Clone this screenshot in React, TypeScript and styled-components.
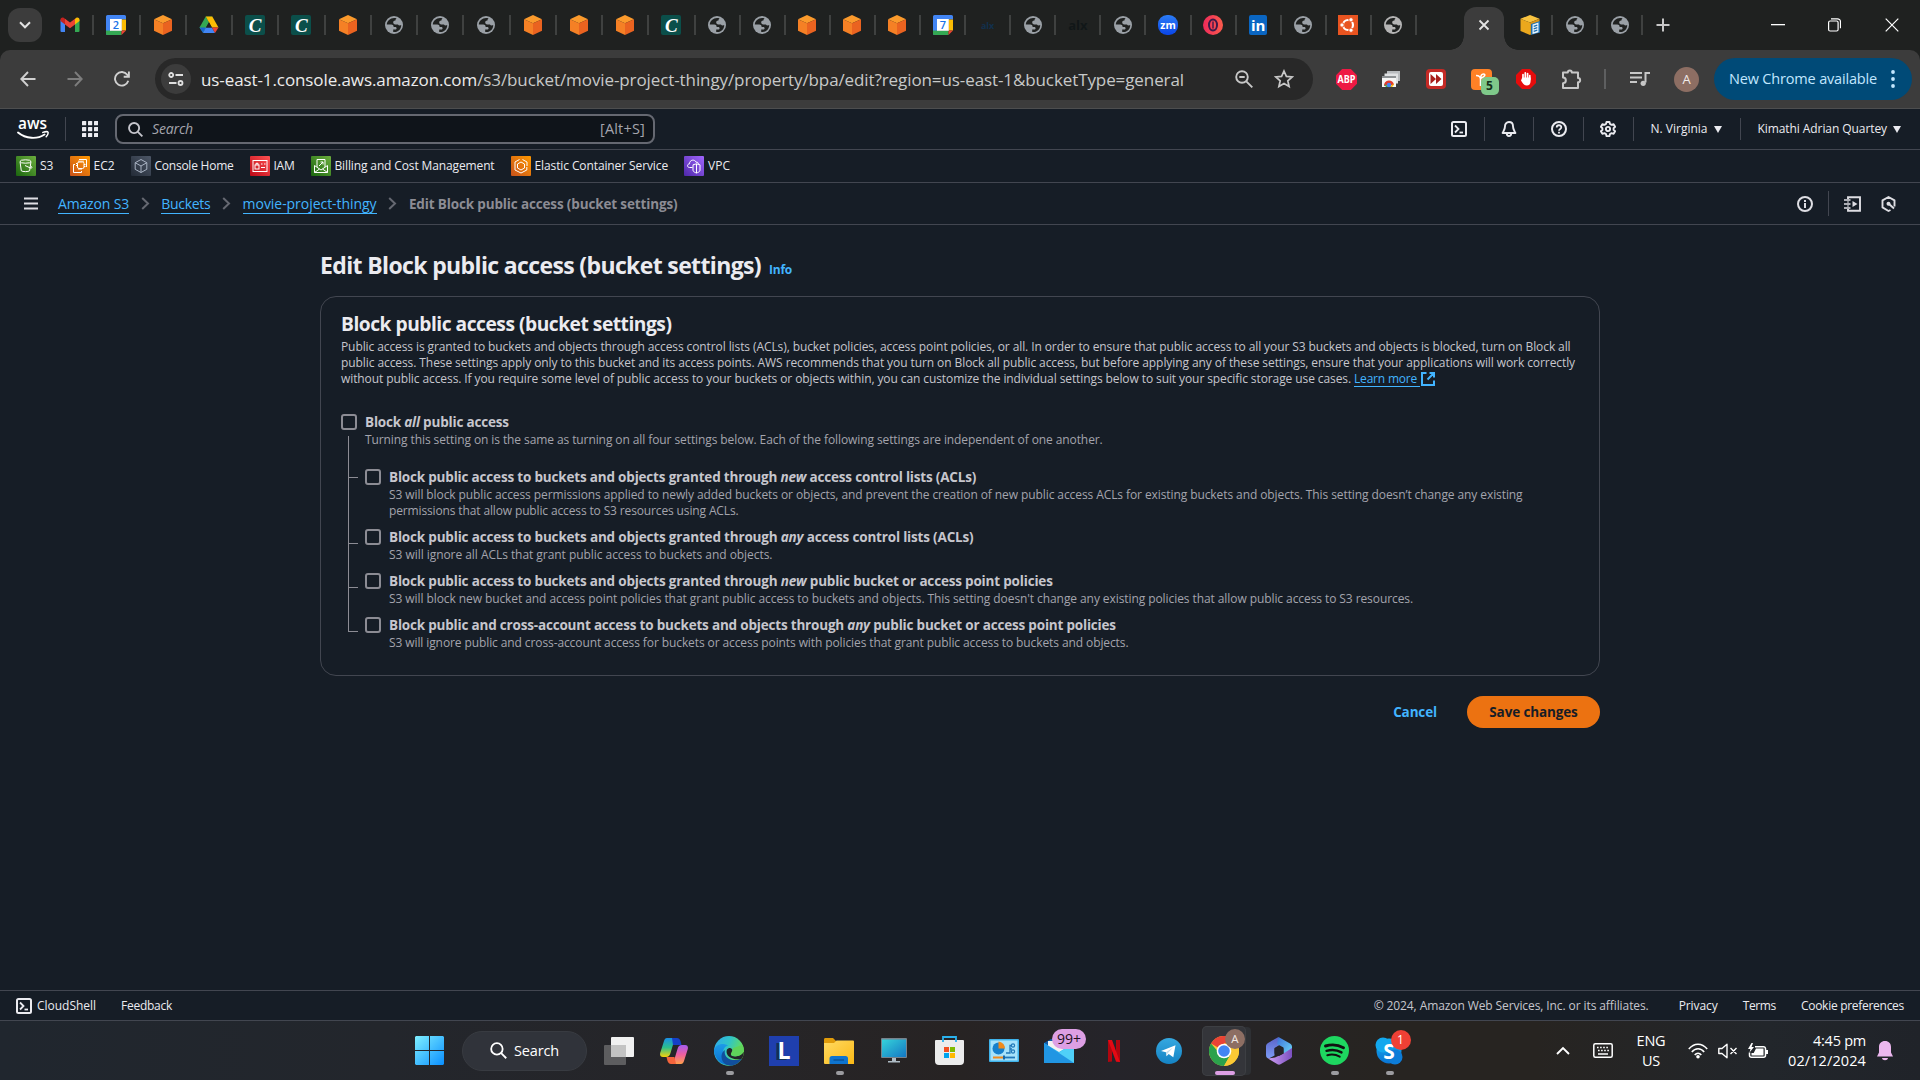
import React from "react";
import styled, { createGlobalStyle, css } from "styled-components";

const sans = `"Open Sans", "Noto Sans", "Liberation Sans", sans-serif`;

const GlobalStyle = createGlobalStyle`
  * { box-sizing: border-box; }
  html, body { margin: 0; padding: 0; }
  body { background: #161d26; font-family: ${sans}; color: #dedee3; overflow: hidden; }
  svg { display: block; flex: none; }
`;

const T = styled.span<{ $ls?: number }>`
  white-space: pre;
  letter-spacing: ${(p) => p.$ls ?? 0}px;
`;

const Screen = styled.div`
  width: 1920px;
  height: 1080px;
  display: flex;
  flex-direction: column;
  overflow: hidden;
`;

/* ---------- browser tab strip ---------- */

const TabStrip = styled.div`
  height: 50px;
  flex: none;
  display: flex;
  align-items: center;
  background: #1f2120;
`;
const TabSearch = styled.div`
  width: 34px;
  height: 34px;
  margin: 0 6px 0 8px;
  border-radius: 12px;
  background: #3c3c3c;
  display: grid;
  place-items: center;
`;
const TabCell = styled.div<{ $w: number }>`
  width: ${(p) => p.$w}px;
  height: 20px;
  flex: none;
  display: flex;
  align-items: center;
  justify-content: center;
  border-right: 2px solid #3f4140;
`;
const ActiveTab = styled.div`
  align-self: flex-end;
  display: flex;
  align-items: flex-end;
  margin: 0 -10px 0 33px;
`;
const ActiveBody = styled.div`
  width: 40px;
  height: 43px;
  border-radius: 12px 12px 0 0;
  background: #3c3c3c;
  display: grid;
  place-items: center;
  padding-bottom: 7px;
`;
const Flare = styled.div<{ $side: "left" | "right" }>`
  width: 14px;
  height: 14px;
  background: radial-gradient(circle at ${(p) => (p.$side === "left" ? "0 0" : "100% 0")}, transparent 13.5px, #3c3c3c 14px);
`;
const NewTab = styled.div`
  width: 40px;
  display: grid;
  place-items: center;
`;
const WindowControls = styled.div`
  margin-left: auto;
  display: flex;
  & > div { width: 57px; display: grid; place-items: center; }
`;
const LetterTile = styled.div<{ $bg: string; $r: number; $size: number; $w?: number }>`
  width: ${(p) => p.$w ?? 20}px;
  height: 20px;
  border-radius: ${(p) => p.$r}px;
  background: ${(p) => p.$bg};
  color: #fff;
  font-size: ${(p) => p.$size}px;
  font-weight: 700;
  line-height: 1;
  display: grid;
  place-items: center;
`;
const ScriptTile = styled(LetterTile)`
  font-family: "Liberation Serif", serif;
  font-style: italic;
`;
const DarkWord = styled.div<{ $c: string; $size: number }>`
  color: ${(p) => p.$c};
  font-size: ${(p) => p.$size}px;
  font-weight: 700;
  line-height: 1;
`;

const Gmail = () => (
  <svg width="20" height="16" viewBox="0 0 20 16">
    <path d="M0.5 2.5V14a1 1 0 0 0 1 1H5V6.5z" fill="#4285f4" />
    <path d="M19.5 2.5V14a1 1 0 0 1-1 1H15V6.5z" fill="#34a853" />
    <path d="M15 1.8V7.5L19.5 4V2.7c0-2-2.2-2.6-3.4-1.7z" fill="#fbbc04" />
    <path d="M5 7.5V1.8L10 5.6l5-3.8v5.7l-5 3.8z" fill="#ea4335" />
    <path d="M.5 2.7V4L5 7.5V1.8L3.9 1C2.7.1.5.7.5 2.7z" fill="#c5221f" />
  </svg>
);
const Calendar = ({ day }: { day: string }) => (
  <svg width="20" height="20" viewBox="0 0 20 20">
    <path d="M0 1.5A1.5 1.5 0 0 1 1.5 0H18.5A1.5 1.5 0 0 1 20 1.5V4.5H0z" fill="#4285f4" />
    <path d="M0 4H4.5V20H1.5A1.5 1.5 0 0 1 0 18.5z" fill="#4285f4" />
    <path d="M15.5 4.5H20V15.5H15.5z" fill="#fbbc04" />
    <path d="M0 15.5H15.5V20H1.5A1.5 1.5 0 0 1 0 18.5z" fill="#34a853" />
    <path d="M15.5 15.5H20L15.5 20z" fill="#ea4335" />
    <rect x="4" y="4" width="11.8" height="11.8" fill="#fff" />
    <text x="9.9" y="13.9" textAnchor="middle" fontSize="11" fontWeight="600" fill="#1a73e8">{day}</text>
  </svg>
);
const Cube = () => (
  <svg width="20" height="20" viewBox="0 0 20 20">
    <path d="M10 0L19 4.3 10 8.2 1 4.3z" fill="#fb9a2c" />
    <path d="M1 4.3L10 8.2V20L1 15.7z" fill="#f58025" />
    <path d="M19 4.3L10 8.2V20l9-4.3z" fill="#ea6320" />
  </svg>
);
const Drive = () => (
  <svg width="20" height="18" viewBox="0 0 20 18">
    <path d="M6.7.5h6.6L10 6.2z" fill="#188038" />
    <path d="M6.7.5L10 6.2 4.3 16.8.5 11.5z" fill="#34a853" />
    <path d="M13.3.5L19.5 11.5h-6.6L6.7.5z" fill="#fbbc04" />
    <path d="M.5 11.5H6.9L4 17z" fill="#1967d2" />
    <path d="M6.9 11.5h6L16 17H4z" fill="#4285f4" />
    <path d="M12.9 11.5h6.6L16 17z" fill="#ea4335" />
    <path d="M10 6.2L6.9 11.5h6z" fill="#1f2120" />
  </svg>
);
const Globe = ({ c = "#9aa0a6" }: { c?: string }) => (
  <svg width="18" height="18" viewBox="0 0 18 18">
    <circle cx="9" cy="9" r="9" fill={c} />
    <path d="M9.500 1.900C5.300 1.700 1.900 4.700 1.800 8.600H6.300c1.300 0 2.300.9 2.300 2.100v.3h1.700c.8 0 1.300.6 1.300 1.300 0 .8-.6 1.300-1.300 1.300H8.200v2.300c4.400.9 8.200-2.600 8-6.900-1 .8-2.700.6-3.300-.6H10.200c-1.200 0-2-.9-2-1.900 0-1.100.8-1.900 1.900-1.900h.4c0-1 .3-1.900 1.300-2C11.800 2.200 10.500 1.900 9.500 1.900z" fill="#1f2120" />
    <path d="M2.200 10.200H5.600v3.200l1.500 1.500" fill="none" stroke="#1f2120" strokeWidth="0" />
  </svg>
);
const OperaLike = () => (
  <svg width="20" height="20" viewBox="0 0 20 20">
    <defs><linearGradient id="op" x1="0" x2="1"><stop offset="0" stopColor="#ee2a5a" /><stop offset="1" stopColor="#fb5b4c" /></linearGradient></defs>
    <circle cx="10" cy="10" r="10" fill="url(#op)" />
    <ellipse cx="10" cy="10" rx="4" ry="5.5" fill="none" stroke="#3b1a4a" strokeWidth="2" />
    <path d="M10 6.5V13.5" stroke="#3b1a4a" strokeWidth="1.4" />
  </svg>
);
const Ubuntu = () => (
  <svg width="20" height="20" viewBox="0 0 20 20">
    <rect width="20" height="20" fill="#e95420" />
    <circle cx="10" cy="10" r="5" fill="none" stroke="#fff" strokeWidth="2.2" />
    {[[4, 10], [13, 4.8], [13, 15.2]].map(([x, y]) => (
      <circle key={y} cx={x} cy={y} r="2.200" fill="#fff" stroke="#e95420" strokeWidth="1" />
    ))}
  </svg>
);
const BoxDoc = () => (
  <svg width="20" height="20" viewBox="0 0 20 20">
    <path d="M10 0l9.5 3.8L10 7.6.5 3.8z" fill="#f9c440" />
    <path d="M.5 3.8L10 7.6V20L.5 16z" fill="#eba81d" />
    <path d="M19.5 3.8L10 7.6V20l9.500-4z" fill="#d9961a" />
    <path d="M11 9l9-3v11.500l-9 2.500z" fill="#1d6fb0" />
    <path d="M12.500 9.500l6-2v9.800l-6 1.700z" fill="#eaf4fb" />
    <path d="M13.700 11.300l3.600-1.100M13.700 13.800l3.600-1.100M13.700 16.300l3.600-1.100" stroke="#1d6fb0" strokeWidth="1.3" />
  </svg>
);

const wideTabs = [
  <Gmail />, <Calendar day="2" />, <Cube />, <Drive />, "C", "C", <Cube />, <Globe />, <Globe />, <Globe />,
  <Cube />, <Cube />, <Cube />, "C",
];
const narrowTabs = [
  <Globe />, <Globe />, <Cube />, <Cube />, <Cube />, <Calendar day="7" />,
  <DarkWord $c="#12304d" $size={9}>alx</DarkWord>, <Globe />,
  <DarkWord $c="#111718" $size={13}>alx</DarkWord>, <Globe />,
  <LetterTile $bg="linear-gradient(#2b7cf5,#0a45e8)" $r={9} $size={10.5}>zm</LetterTile>,
  <OperaLike />,
  <LetterTile $bg="#0a66c2" $r={2} $size={15} $w={18}>in</LetterTile>,
  <Globe />, <Ubuntu />, <Globe c="#b4b4b4" />,
];

/* ---------- browser toolbar ---------- */

const ToolbarBack = styled.div`
  background: #1f2120;
  flex: none;
`;
const Toolbar = styled.div`
  height: 59px;
  display: flex;
  align-items: center;
  background: #3c3c3c;
  border-bottom: 1px solid #4d4e4f;
  border-radius: 10px 10px 0 0;
`;
const NavButtons = styled.div`
  display: flex;
  width: 155px;
  padding-left: 4px;
  & > div { width: 47px; display: grid; place-items: center; }
`;
const UrlBar = styled.div`
  width: 1158px;
  height: 42px;
  border-radius: 21px;
  background: #282828;
  display: flex;
  align-items: center;
  padding: 0 19px 0 6px;
  font-size: 17px;
  color: #c7c9c8;
`;
const SiteInfo = styled.div`
  width: 30px;
  height: 30px;
  border-radius: 15px;
  background: #3c3c3c;
  display: grid;
  place-items: center;
  margin-right: 10px;
`;
const Domain = styled.span` color: #ececec; `;
const UrlActions = styled.div`
  margin-left: auto;
  display: flex;
  gap: 21px;
  align-items: center;
`;
const Extensions = styled.div`
  display: flex;
  margin-left: 10.5px;
  & > div { width: 45px; display: grid; place-items: center; }
`;
const Divider = styled.div<{ $h: number; $ml: number; $mr: number; $c: string; $w?: number }>`
  width: ${(p) => p.$w ?? 1}px;
  height: ${(p) => p.$h}px;
  margin: 0 ${(p) => p.$mr}px 0 ${(p) => p.$ml}px;
  background: ${(p) => p.$c};
  flex: none;
`;
const ExtWithBadge = styled.div` position: relative; `;
const CountBadge = styled.div`
  position: absolute;
  left: 22px;
  top: 8px;
  width: 18px;
  height: 18px;
  border-radius: 5px;
  background: #7fc98a;
  color: #16301b;
  font-size: 12px;
  font-weight: 700;
  line-height: 18px;
  text-align: center;
`;
const Avatar = styled.div`
  width: 25px;
  height: 25px;
  border-radius: 50%;
  background: #8d6e63;
  color: #f2ecea;
  font-size: 13px;
  display: grid;
  place-items: center;
  margin-left: 24px;
`;
const UpdatePill = styled.div`
  height: 42px;
  width: 198px;
  margin-left: 15px;
  border-radius: 21px;
  background: #004a77;
  color: #c2e7ff;
  font-size: 14.5px;
  display: flex;
  align-items: center;
  justify-content: space-between;
  padding: 0 17px 0 15px;
  & > span { padding-bottom: 1px; }
`;

/* ---------- AWS console navigation ---------- */

const TopNav = styled.div`
  height: 41px;
  flex: none;
  display: flex;
  align-items: center;
  border-bottom: 1px solid #424650;
  font-size: 12px;
  font-weight: 500;
  color: #ebebf0;
  padding-left: 17px;
`;
const SearchBox = styled.div`
  width: 540px;
  height: 30px;
  margin-left: 17px;
  border: 2px solid #656871;
  border-radius: 8px;
  background: #0f141a;
  display: flex;
  align-items: center;
  padding: 0 8px 0 11px;
  font-size: 14px;
  font-weight: 400;
  color: #a4a4ad;
`;
const Placeholder = styled.span`
  font-style: italic;
  margin-left: 9px;
  flex: 1;
  padding-bottom: 1px;
`;
const Shortcut = styled.span`
  font-size: 14.5px;
  padding-bottom: 1px;
`;
const NavIcons = styled.div<{ $pr: number }>`
  margin-left: auto;
  display: flex;
  align-items: center;
  padding-right: ${(p) => p.$pr}px;
`;
const NavIcon = styled.div`
  width: 49.6px;
  height: 24px;
  display: grid;
  place-items: center;
  border-right: 1px solid #424650;
`;
const NavMenu = styled.div<{ $last?: boolean }>`
  height: 22px;
  display: flex;
  align-items: center;
  gap: 6px;
  padding: 0 18px 0 17px;
  ${(p) => !p.$last && css`border-right: 1px solid #424650;`}
  & > span:first-child { padding-bottom: 1px; }
`;
const Caret = styled.span`
  width: 0;
  height: 0;
  border: 4px solid transparent;
  border-top: 7px solid #ebebf0;
  border-bottom: 0;
`;
const Favorites = styled.div`
  height: 33px;
  flex: none;
  display: flex;
  align-items: center;
  gap: 16px;
  padding-left: 16px;
  border-bottom: 1px solid #424650;
  font-size: 12px;
  font-weight: 500;
  color: #ebebf0;
`;
const Favorite = styled.div`
  display: flex;
  align-items: center;
  gap: 4px;
  & > span { padding-bottom: 2px; }
`;
const Crumbs = styled.div`
  height: 42px;
  flex: none;
  display: flex;
  align-items: center;
  padding-left: 24px;
  border-bottom: 1px solid #424650;
  font-size: 14px;
  & > svg { margin-right: 20px; }
`;
const CrumbLink = styled.span`
  color: #42b4ff;
  line-height: 18px;
  border-bottom: 1px solid #42b4ff;
  margin-top: 1.5px;
`;
const CrumbCurrent = styled.span`
  color: #8c8c94;
  font-size: 13.5px;
  font-weight: 700;
  margin-top: 1px;
`;
const CrumbSep = styled.div`
  width: 32.3px;
  display: grid;
  place-items: center;
`;
const PanelIcons = styled.div`
  display: flex;
  gap: 20px;
`;

/* ---------- page ---------- */

const Main = styled.main`
  flex: 1;
  min-height: 0;
  padding: 24px 320px 0;
`;
const TitleRow = styled.div`
  height: 47px;
  display: flex;
  align-items: baseline;
  gap: 8px;
`;
const H1 = styled.h1`
  margin: 0;
  font-size: 23px;
  line-height: 32px;
  font-weight: 700;
  color: #ebebf0;
`;
const Info = styled.span`
  font-size: 12px;
  font-weight: 700;
  color: #42b4ff;
`;
const Card = styled.section`
  height: 380px;
  border: 1px solid #424650;
  border-radius: 16px;
  padding: 15px 20px;
`;
const H2 = styled.h2`
  margin: 0;
  font-size: 19.2px;
  line-height: 24px;
  font-weight: 700;
  color: #ebebf0;
`;
const Intro = styled.div`
  margin-top: 3px;
  font-size: 12px;
  color: #c6c6cd;
  display: flex;
  flex-direction: column;
`;
const IntroLine = styled.div`
  height: 16px;
  line-height: 16px;
  display: flex;
  align-items: center;
`;
const LearnMore = styled.span`
  color: #42b4ff;
  line-height: 15px;
  border-bottom: 1px solid #42b4ff;
  margin-right: 1px;
`;
const Option = styled.div`
  display: grid;
  grid-template-columns: 16px auto;
  column-gap: 8px;
  align-items: start;
`;
const Check = styled.div`
  width: 16px;
  height: 16px;
  margin-top: 2px;
  border: 2px solid #8c8c94;
  border-radius: 3px;
`;
const OptionLabel = styled.div`
  font-size: 13.5px;
  line-height: 20px;
  height: 20px;
  font-weight: 700;
  color: #c6c6cd;
`;
const OptionDesc = styled.div`
  height: 16px;
  font-size: 12px;
  line-height: 16px;
  color: #a4a4ad;
`;
const AllOption = styled.div` margin-top: 25px; `;
const Tree = styled.div`
  display: grid;
  grid-template-columns: 17px 1fr;
  margin: -12px 0 0 7px;
`;
const Branches = styled.div`
  display: flex;
  flex-direction: column;
  border-left: 1px solid #8c8c94;
  height: 196px;
  width: 10px;
`;
const Branch = styled.div<{ $h: number }>`
  height: ${(p) => p.$h}px;
  border-bottom: 1px solid #8c8c94;
`;
const Children = styled.div`
  display: flex;
  flex-direction: column;
  gap: 8px;
  padding-top: 31px;
`;
const Actions = styled.div`
  margin-top: 20px;
  display: flex;
  justify-content: flex-end;
  align-items: center;
  gap: 30px;
  font-size: 13.5px;
  font-weight: 700;
`;
const CancelLink = styled.span`
  color: #42b4ff;
  padding-bottom: 1px;
`;
const SaveButton = styled.div`
  width: 133px;
  height: 32px;
  border-radius: 16px;
  background: #ec7211;
  color: #161d26;
  display: grid;
  place-items: center;
  padding-bottom: 1px;
`;
const Footer = styled.footer`
  height: 31px;
  flex: none;
  display: flex;
  align-items: center;
  border-top: 1px solid #424650;
  border-bottom: 1px solid #424650;
  font-size: 12px;
  font-weight: 500;
  color: #ebebf0;
  padding: 0 16px;
`;
const FooterLeft = styled.div`
  display: flex;
  align-items: center;
  gap: 5px;
  margin-right: 25px;
`;
const FooterRight = styled.div`
  display: flex;
  gap: 25px;
  margin-left: auto;
`;
const Copyright = styled.span`
  color: #c6c6cd;
  font-weight: 400;
  margin-right: 5px;
`;

/* ---------- taskbar ---------- */

const Taskbar = styled.div`
  height: 59px;
  flex: none;
  display: flex;
  align-items: center;
  background: linear-gradient(90deg, #20262e 0, #23262c 20%, #262528 38%, #272323 50%, #25242a 58%, #272421 72%, #272421 80%, #22262b 92%, #202329 100%);
  color: #fff;
`;
const StartButton = styled.div` margin-left: 415px; `;
const TaskSearch = styled.div`
  width: 125px;
  height: 40px;
  margin: 0 4.5px 0 18px;
  border-radius: 20px;
  background: #30333a;
  border: 1px solid #383b41;
  display: flex;
  align-items: center;
  justify-content: center;
  gap: 7px;
  font-size: 14.5px;
  & > span { padding-bottom: 1px; }
`;
const Task = styled.div`
  position: relative;
  width: 55px;
  height: 50px;
  display: grid;
  place-items: center;
`;
const HotPlate = styled.div`
  width: 44px;
  height: 50px;
  border-radius: 5px;
  background: #34353a;
  box-shadow: inset 0 0 0 1px #3d3f43, 6px 0 0 -1px #2e3034;
  display: grid;
  place-items: center;
`;
const Running = styled.div<{ $w: number; $c: string; $l: number }>`
  position: absolute;
  bottom: 1px;
  left: ${(p) => p.$l}px;
  width: ${(p) => p.$w}px;
  height: 4px;
  border-radius: 2px;
  background: ${(p) => p.$c};
`;
const TaskBadge = styled.div<{ $w: number; $bg: string; $c: string; $l: number; $s: number; $t: number }>`
  position: absolute;
  left: ${(p) => p.$l}px;
  top: ${(p) => p.$t}px;
  width: ${(p) => p.$w}px;
  height: 20px;
  border-radius: 10px;
  background: ${(p) => p.$bg};
  color: ${(p) => p.$c};
  font-size: ${(p) => p.$s}px;
  line-height: 20px;
  text-align: center;
`;
const LTile = styled.div`
  width: 30px;
  height: 30px;
  background: #1f3fae;
  color: #fff;
  font-size: 23px;
  font-weight: 700;
  line-height: 28px;
  text-align: center;
  text-shadow: -3px 1px 0 #123055;
`;
const Tray = styled.div`
  margin-left: auto;
  padding-right: 27px;
  display: flex;
  align-items: center;
  font-size: 14.5px;
  line-height: 20px;
`;
const Lang = styled.div`
  width: 32px;
  margin: 0 21px 0 22px;
  display: flex;
  flex-direction: column;
  align-items: center;
`;
const Clock = styled.div`
  width: 80px;
  margin: 0 11px 0 18px;
  display: flex;
  flex-direction: column;
  align-items: flex-end;
`;
const TrayIcons = styled.div<{ $gap: number }>`
  display: flex;
  gap: ${(p) => p.$gap}px;
  align-items: center;
`;

/* ---------- icons ---------- */

const stroke = (c: string, w = 2) => ({ fill: "none", stroke: c, strokeWidth: w });

const AwsLogo = () => (
  <svg width="32" height="40" viewBox="0 0 32 40">
    <text x="15.5" y="20" textAnchor="middle" fontSize="17" fontWeight="600" textLength="29" lengthAdjust="spacingAndGlyphs" fill="#fff">aws</text>
    <path d="M1 23.500C9 30 20 30.500 27.500 25.500" {...stroke("#fff", 1.9)} strokeLinecap="round" />
    <path d="M25.800 23.400c2.600-.9 5-.7 5.200-.2.200.6-.3 2.900-1.800 4.500" {...stroke("#fff", 1.5)} strokeLinecap="round" />
  </svg>
);
const Shell = () => (
  <svg width="16" height="16" viewBox="0 0 16 16" {...stroke("#ebebf0")}>
    <rect x="1" y="1" width="14" height="14" rx="1.5" />
    <path d="M4 4.500l3.500 3.500L4 11.500" strokeWidth="1.8" /><path d="M8.500 11.500H12" strokeWidth="1.8" />
  </svg>
);
const Bell = () => (
  <svg width="16" height="16" viewBox="0 0 16 16" {...stroke("#ebebf0", 1.9)} strokeLinejoin="round">
    <path d="M8 1C5.400 1 4 3 4 5.200 4 8.300 2.800 9.500 1.600 12H14.400C13.200 9.500 12 8.300 12 5.200 12 3 10.600 1 8 1z" />
    <path d="M5.800 12.500c0 3.300 4.400 3.300 4.400 0" />
  </svg>
);
const Help = () => (
  <svg width="16" height="16" viewBox="0 0 16 16" {...stroke("#ebebf0")}>
    <circle cx="8" cy="8" r="7" />
    <path d="M5.700 6.500C5.700 3.500 10.300 3.600 10.300 6.300 10.300 8 8 7.900 8 9.800M8 10.800V12.500" strokeWidth="1.8" />
  </svg>
);
const Gear = () => (
  <svg width="16" height="16" viewBox="0 0 16 16" {...stroke("#ebebf0", 1.9)} strokeLinejoin="round">
    <path d="M6.500 1h3l.5 2 1.600.9 2-.7 1.500 2.600-1.500 1.400v1.700l1.500 1.400-1.500 2.600-2-.7-1.600.9-.5 2h-3L6 13.100l-1.600-.9-2 .7L.9 10.300l1.500-1.400V7.200L.9 5.800l1.500-2.600 2 .7L6 3z" />
    <circle cx="8" cy="8" r="2.1" />
  </svg>
);
const Mag = ({ c, s, w = 2 }: { c: string; s: number; w?: number }) => (
  <svg width={s} height={s} viewBox="0 0 16 16" {...stroke(c, w)}>
    <circle cx="6.5" cy="6.5" r="5.4" /><path d="M10.5 10.5L15.3 15.3" />
  </svg>
);
const GridIcon = () => (
  <svg width="16" height="16" viewBox="0 0 16 16" fill="#ebebf0">
    {[0, 6, 12].map((y) => [0, 6, 12].map((x) => <rect key={x + "-" + y} x={x} y={y} width="4.2" height="4.2" rx=".5" />))}
  </svg>
);
const favGlyphs: Record<string, [string, string, React.ReactNode]> = {
  s3: ["#1b660f", "#6cae3e", <><ellipse cx="9.5" cy="5.5" rx="5.5" ry="1.7" /><path d="M4 5.500l1.300 9.300c1.300 1.100 7 1.100 8.300 0L15 5.500M9 9.500l5 2.300c2 .9 3-.6.700-1.900" /></>],
  ec2: ["#c8511b", "#ff9900", <><rect x="7.5" y="6" width="6.5" height="6.5" rx="1.500" /><path d="M9 4.500v1.500M11 4.500v1.500M13 4.500v1.500M9 12.500V14M11 12.500V14M6 7.500h1.500M6 9.500h1.500M14 8.500h1.500M14 10.500h1.500" /><path d="M9 3.500h7.500v7.500M5 8.500H3.500v8H11.500V15" /></>],
  home: ["#232b37", "#4d5767", <path d="M10 3.500l5.800 3.200v6.600L10 16.500l-5.800-3.200V6.700zM4.200 6.700L10 10l5.800-3.300M10 10v6.500" stroke="#aab4c4" />],
  iam: ["#bd0816", "#ff5252", <><rect x="3" y="4.5" width="14" height="11" /><rect x="5" y="9" width="4" height="4" /><path d="M6 9V7.300h2V9M11 8h1.500M14 8h1.500M11 11.500h4" /></>],
  bill: ["#1b660f", "#6cae3e", <path d="M3.500 9.500v7h13v-7l-6.500 4.500zM3.500 16.500l5-3.500M16.500 16.500l-5-3.500M6 11V3.500h8V11M8 10l4-4M9.500 6H12v2.500" />],
  ecs: ["#c8511b", "#ff9900", <><path d="M8.500 3.500L4 6v8l6 3 5.800-3V11M11.500 3.500L16 6v4" /><path d="M10 6l3.500 2v4L10 14l-3.500-2V8z" /></>],
  vpc: ["#4d27a8", "#a166ff", <><path d="M8.500 11.500H5.500C3 11.500 2.800 8 5.500 7.800 5.500 3.500 11 3 12 6.200c1.800-.3 2.500.8 2.500 2" /><path d="M9 8.800l3.500-1 3.500 1v5.500c0 1.300-2 2.200-3.500 2.700-1.500-.5-3.500-1.400-3.500-2.700zM12.500 8v9" /></>],
};
const FavIcon = ({ k }: { k: string }) => {
  const [a, b, g] = favGlyphs[k];
  return (
    <svg width="20" height="20" viewBox="0 0 20 20">
      <defs><linearGradient id={"f" + k} x1="0" y1="1" x2="1" y2="0"><stop stopColor={a} /><stop offset="1" stopColor={b} /></linearGradient></defs>
      <rect width="20" height="20" rx="1" fill={`url(#f${k})`} />
      <g {...stroke("#fff", 1)}>{g}</g>
    </svg>
  );
};
const ChevronRight = () => (
  <svg width="9" height="13" viewBox="0 0 9 13" {...stroke("#656871")}><path d="M1.2 1L7 6.5 1.2 12" /></svg>
);

const favorites: [string, string, number][] = [
  ["s3", "S3", 0.023], ["ec2", "EC2", -0.031], ["home", "Console Home", -0.24], ["iam", "IAM", -0.245],
  ["bill", "Billing and Cost Management", -0.128], ["ecs", "Elastic Container Service", -0.109], ["vpc", "VPC", 0.021],
];

const options: { before: string; em: string; after: string; ls: number; lines: [string, number][] }[] = [
  {
    before: "Block public access to buckets and objects granted through ", em: "new", after: " access control lists (ACLs)", ls: -0.184,
    lines: [
      ["S3 will block public access permissions applied to newly added buckets or objects, and prevent the creation of new public access ACLs for existing buckets and objects. This setting doesn’t change any existing", -0.088],
      ["permissions that allow public access to S3 resources using ACLs.", -0.136],
    ],
  },
  {
    before: "Block public access to buckets and objects granted through ", em: "any", after: " access control lists (ACLs)", ls: -0.179,
    lines: [["S3 will ignore all ACLs that grant public access to buckets and objects.", -0.048]],
  },
  {
    before: "Block public access to buckets and objects granted through ", em: "new", after: " public bucket or access point policies", ls: -0.181,
    lines: [["S3 will block new bucket and access point policies that grant public access to buckets and objects. This setting doesn't change any existing policies that allow public access to S3 resources.", -0.08]],
  },
  {
    before: "Block public and cross-account access to buckets and objects through ", em: "any", after: " public bucket or access point policies", ls: -0.19,
    lines: [["S3 will ignore public and cross-account access for buckets or access points with policies that grant public access to buckets and objects.", -0.099]],
  },
];

export default function App() {
  return (
    <Screen>
      <GlobalStyle />
      <TabStrip>
        <TabSearch>
          <svg width="12" height="8" viewBox="0 0 12 8" {...stroke("#e3e3e3")}><path d="M1 1.3l5 5 5-5" /></svg>
        </TabSearch>
        {wideTabs.map((t, i) => (
          <TabCell key={i} $w={46.25}>{t === "C" ? <ScriptTile $bg="#0b4f4a" $r={2} $size={19}>C</ScriptTile> : t}</TabCell>
        ))}
        {narrowTabs.map((t, i) => <TabCell key={i} $w={45.1}>{t}</TabCell>)}
        <ActiveTab>
          <Flare $side="left" />
          <ActiveBody>
            <svg width="12" height="12" viewBox="0 0 12 12" {...stroke("#e3e3e3", 1.8)}><path d="M1.5 1.5l9 9M10.5 1.5l-9 9" /></svg>
          </ActiveBody>
          <Flare $side="right" />
        </ActiveTab>
        <TabCell $w={45}><BoxDoc /></TabCell>
        <TabCell $w={45}><Globe /></TabCell>
        <TabCell $w={45}><Globe /></TabCell>
        <NewTab><svg width="14" height="14" viewBox="0 0 14 14" {...stroke("#c7c7c7")}><path d="M7 .5v13M.5 7h13" /></svg></NewTab>
        <WindowControls>
          <div><svg width="14" height="2" viewBox="0 0 14 2"><rect width="14" height="1.3" fill="#fff" /></svg></div>
          <div><svg width="13" height="14" viewBox="0 0 13 14" {...stroke("#fff", 1.2)}><rect x=".6" y="3" width="9.5" height="10" rx="1.5" /><path d="M3 .8h6.500a3 3 0 0 1 3 3v6.500" /></svg></div>
          <div><svg width="14" height="14" viewBox="0 0 14 14" {...stroke("#fff", 1.2)}><path d="M.7.7l12.600 12.600M13.300.7L.7 13.300" /></svg></div>
        </WindowControls>
      </TabStrip>

      <ToolbarBack>
        <Toolbar>
          <NavButtons>
            <div><svg width="16" height="16" viewBox="0 0 16 16" {...stroke("#d0d0d0", 1.9)}><path d="M15.5 8H1.5M8 1L1.3 8 8 15" /></svg></div>
            <div><svg width="16" height="16" viewBox="0 0 16 16" {...stroke("#7d7d7d", 1.9)}><path d="M.5 8h14M8 1l6.700 7L8 15" /></svg></div>
            <div><svg width="16" height="16" viewBox="0 0 16 16" {...stroke("#d0d0d0", 1.9)}><path d="M14.300 9.800A6.800 6.800 0 1 1 13.300 3.800L14.800 5.400M14.900.5v5.200H9.700" /></svg></div>
          </NavButtons>
          <UrlBar>
            <SiteInfo>
              <svg width="16" height="14" viewBox="0 0 16 14" {...stroke("#e0e0e0", 1.8)}><circle cx="3.2" cy="3" r="2" /><path d="M7.5 3H15M1 11h7.5" /><circle cx="12.5" cy="11" r="2" /></svg>
            </SiteInfo>
            <T $ls={-0.097}><Domain>us-east-1.console.aws.amazon.com</Domain>/s3/bucket/movie-project-thingy/property/bpa/edit?region=us-east-1&amp;bucketType=general</T>
            <UrlActions>
              <svg width="18" height="18" viewBox="0 0 18 18" {...stroke("#c7c7c7", 1.9)}><circle cx="7" cy="7" r="5.8" /><path d="M11.3 11.3l6 6M4.3 7h5.4" /></svg>
              <svg width="20" height="20" viewBox="0 0 20 20" {...stroke("#c7c7c7", 1.7)}><path d="M10 2l2.400 5.400 5.800.5-4.400 3.900 1.300 5.700L10 14.500l-5.100 3 1.300-5.700L1.800 7.900l5.800-.5z" /></svg>
            </UrlActions>
          </UrlBar>
          <Extensions>
            <div>
              <svg width="21" height="21" viewBox="0 0 21 21"><path d="M6.2 0h8.6L21 6.2v8.600L14.800 21H6.2L0 14.8V6.2z" fill="#ee1944" /><text x="10.5" y="14.3" textAnchor="middle" fontSize="10.5" fontWeight="700" textLength="18" lengthAdjust="spacingAndGlyphs" fill="#fff">ABP</text></svg>
            </div>
            <div>
              <svg width="18" height="18" viewBox="0 0 18 18"><path d="M5 1h13v10H5z" fill="#b9bcbf" /><path d="M2.5 3.500H16v10H2.500z" fill="#dfe1e3" /><path d="M0 6h14v11H0z" fill="#f5f5f5" /><path d="M0 6h14v2H0z" fill="#8d9194" /><path d="M2 16a5 5 0 0 1 10-1H7z" fill="#e33b2e" /><path d="M2.500 14A5 5 0 0 0 4 17h3z" fill="#34a853" /><path d="M12 13.500A5 5 0 0 1 10 17H7z" fill="#fbbc04" /><circle cx="7" cy="15" r="2.2" fill="#4285f4" /></svg>
            </div>
            <div>
              <svg width="20" height="20" viewBox="0 0 20 20"><rect width="20" height="20" rx="4" fill="#c42a26" /><rect x="3" y="3" width="14" height="14" rx="2" fill="#fff" /><path d="M4.500 5l5.500 5-5.500 5zM10 5l5.500 5-5.500 5z" fill="#a81f1c" /></svg>
            </div>
            <ExtWithBadge>
              <svg width="21" height="21" viewBox="0 0 21 21"><rect width="21" height="21" rx="4" fill="#ff8126" /><path d="M9.500 17V9.500M5 6.500c2 0 4.500.5 4.500 4M9.500 10.500c0-3 1-5.500 3-5.500 2.300 0 1.800 3-3 4.500" {...stroke("#fff", 1.5)} /></svg>
              <CountBadge>5</CountBadge>
            </ExtWithBadge>
            <div>
              <svg width="20" height="20" viewBox="0 0 20 20"><path d="M6 0h8l6 6v8l-6 6H6l-6-6V6z" fill="#e60c0c" /><path d="M7 10V5.500M9.300 9.500V3.800M11.600 9.500V4.500M13.800 10.500V6.500" stroke="#fff" strokeWidth="1.7" strokeLinecap="round" /><path d="M6.200 8.500h8.400v3.500c0 3-1.500 4.500-3.800 4.500-2.500 0-3.800-1.500-5.800-5z" fill="#fff" /></svg>
            </div>
            <div>
              <svg width="21" height="21" viewBox="0 0 21 21" {...stroke("#c7c7c7")} strokeLinejoin="round"><path d="M2 3.500h4.800a2 2 0 0 1 4 0H17V9a2 2 0 0 1 0 4.300V19H2v-4.800a2.800 2.800 0 0 0 0-5.700z" /></svg>
            </div>
          </Extensions>
          <Divider $w={2} $h={20} $ml={10.5} $mr={24} $c="#5e5f60" />
          <svg width="20" height="16" viewBox="0 0 20 16" {...stroke("#c7c7c7")}><path d="M0 2h12M0 6.500h12M0 11h7M20 2h-4.500v9.500" /><circle cx="13.200" cy="12.300" r="2.600" fill="#c7c7c7" stroke="none" /></svg>
          <Avatar>A</Avatar>
          <UpdatePill>
            <T $ls={-0.174}>New Chrome available</T>
            <svg width="4" height="18" viewBox="0 0 4 18" fill="#c2e7ff"><circle cx="2" cy="2" r="1.9" /><circle cx="2" cy="9" r="1.9" /><circle cx="2" cy="16" r="1.9" /></svg>
          </UpdatePill>
        </Toolbar>
      </ToolbarBack>

      <TopNav>
        <AwsLogo />
        <Divider $h={24} $ml={16} $mr={16} $c="#424650" />
        <GridIcon />
        <SearchBox>
          <Mag c="#c6c6cd" s={15} />
          <Placeholder><T $ls={-0.148}>Search</T></Placeholder>
          <Shortcut><T $ls={0.18}>[Alt+S]</T></Shortcut>
        </SearchBox>
        <NavIcons $pr={1}>
          <NavIcon><Shell /></NavIcon>
          <NavIcon><Bell /></NavIcon>
          <NavIcon><Help /></NavIcon>
          <NavIcon><Gear /></NavIcon>
          <NavMenu><T $ls={0}>N. Virginia</T><Caret /></NavMenu>
          <NavMenu $last><T $ls={-0.08}>Kimathi Adrian Quartey</T><Caret /></NavMenu>
        </NavIcons>
      </TopNav>

      <Favorites>
        {favorites.map(([k, label, ls]) => <Favorite key={k}><FavIcon k={k} /><T $ls={ls}>{label}</T></Favorite>)}
      </Favorites>

      <Crumbs>
        <svg width="14" height="13" viewBox="0 0 14 13" {...stroke("#dedee3")}><path d="M0 1.500h14M0 6.500h14M0 11.500h14" /></svg>
        <CrumbLink><T $ls={-0.165}>Amazon S3</T></CrumbLink><CrumbSep><ChevronRight /></CrumbSep>
        <CrumbLink><T $ls={-0.317}>Buckets</T></CrumbLink><CrumbSep><ChevronRight /></CrumbSep>
        <CrumbLink><T $ls={-0.045}>movie-project-thingy</T></CrumbLink><CrumbSep><ChevronRight /></CrumbSep>
        <CrumbCurrent><T $ls={-0.143}>Edit Block public access (bucket settings)</T></CrumbCurrent>
        <NavIcons $pr={24}>
          <svg width="16" height="16" viewBox="0 0 16 16" {...stroke("#dedee3")}><circle cx="8" cy="8" r="7" /><path d="M8 7v5M8 4v2" /></svg>
          <Divider $h={25} $ml={15} $mr={15} $c="#424650" />
          <PanelIcons>
            <svg width="17" height="16" viewBox="0 0 17 16" {...stroke("#dedee3", 1.9)}><path d="M4 3V1.200h12v13.600H4V13M4 5.500v1M4 9.500v1" /><path d="M0 4h6.500M0 8h6.500M0 12h6.500" strokeWidth="1.6" /><path d="M8.500 5v6l5-3z" fill="#dedee3" stroke="none" /></svg>
            <svg width="15" height="16" viewBox="0 0 15 16" {...stroke("#dedee3", 1.9)} strokeLinejoin="round"><path d="M9.500 14L7.500 15l-6-3.600v-7L7.500 1l6 3.400v6" /><circle cx="7.5" cy="7.8" r="2" fill="#dedee3" stroke="none" /><path d="M8 8l5 4.500" /></svg>
          </PanelIcons>
        </NavIcons>
      </Crumbs>

      <Main>
        <TitleRow>
          <H1><T $ls={-0.635}>Edit Block public access (bucket settings)</T></H1>
          <Info><T $ls={-0.234}>Info</T></Info>
        </TitleRow>
        <Card>
          <H2><T $ls={-0.478}>Block public access (bucket settings)</T></H2>
          <Intro>
            <IntroLine><T $ls={-0.095}>Public access is granted to buckets and objects through access control lists (ACLs), bucket policies, access point policies, or all. In order to ensure that public access to all your S3 buckets and objects is blocked, turn on Block all</T></IntroLine>
            <IntroLine><T $ls={-0.083}>public access. These settings apply only to this bucket and its access points. AWS recommends that you turn on Block all public access, but before applying any of these settings, ensure that your applications will work correctly</T></IntroLine>
            <IntroLine>
              <T $ls={-0.095}>without public access. If you require some level of public access to your buckets or objects within, you can customize the individual settings below to suit your specific storage use cases. </T>
              <LearnMore><T $ls={-0.195}>Learn more </T></LearnMore>
              <svg width="14" height="14" viewBox="0 0 14 14" {...stroke("#42b4ff")}><path d="M5.500 1H1v12h12V8.500M8.500 1H13v4.500M13 1L6.500 7.500" /></svg>
            </IntroLine>
          </Intro>
          <AllOption>
            <Option>
              <Check />
              <div>
                <OptionLabel><T $ls={-0.183}>Block <i>all</i> public access</T></OptionLabel>
                <OptionDesc><T $ls={-0.091}>Turning this setting on is the same as turning on all four settings below. Each of the following settings are independent of one another.</T></OptionDesc>
              </div>
            </Option>
          </AllOption>
          <Tree>
            <Branches><Branch $h={42} /><Branch $h={66} /><Branch $h={44} /><Branch $h={44} /></Branches>
            <Children>
              {options.map((o) => (
                <Option key={o.before + o.em + o.after}>
                  <Check />
                  <div>
                    <OptionLabel><T $ls={o.ls}>{o.before}<i>{o.em}</i>{o.after}</T></OptionLabel>
                    {o.lines.map(([t, ls]) => <OptionDesc key={t}><T $ls={ls}>{t}</T></OptionDesc>)}
                  </div>
                </Option>
              ))}
            </Children>
          </Tree>
        </Card>
        <Actions>
          <CancelLink><T $ls={-0.135}>Cancel</T></CancelLink>
          <SaveButton><T $ls={-0.126}>Save changes</T></SaveButton>
        </Actions>
      </Main>

      <Footer>
        <FooterLeft><Shell /><T $ls={-0.025}>CloudShell</T></FooterLeft>
        <T $ls={-0.26}>Feedback</T>
        <FooterRight>
          <Copyright><T $ls={-0.094}>© 2024, Amazon Web Services, Inc. or its affiliates.</T></Copyright>
          <T $ls={-0.083}>Privacy</T>
          <T $ls={-0.35}>Terms</T>
          <T $ls={-0.286}>Cookie preferences</T>
        </FooterRight>
      </Footer>

      <Taskbar>
        <StartButton>
          <svg width="29" height="29" viewBox="0 0 29 29">
            <defs><linearGradient id="win" x1="0" y1="0" x2="1" y2="1"><stop stopColor="#7fefff" /><stop offset="1" stopColor="#0a8fff" /></linearGradient></defs>
            <path d="M1 0H14V14H0V1zM15 0H28L29 1V14H15zM0 15H14V29H1L0 28zM15 15H29V28L28 29H15z" fill="url(#win)" />
          </svg>
        </StartButton>
        <TaskSearch><Mag c="#fff" s={17} w={1.7} /><T $ls={-0.15}>Search</T></TaskSearch>
        <Task>
          <svg width="30" height="28" viewBox="0 0 30 28"><rect x="0" y="8" width="22" height="20" rx="1" fill="#5d5d5f" /><rect x="7" y="0" width="23" height="20" rx="1" fill="#f1f1f1" /><rect x="7" y="8" width="15" height="12" fill="#c3c3c3" /></svg>
        </Task>
        <Task>
          <svg width="28" height="26" viewBox="0 0 28 26">
            <defs>
              <linearGradient id="cp1" x1="0" y1="0" x2="0" y2="1"><stop stopColor="#1a8fe8" /><stop offset=".5" stopColor="#2cc08c" /><stop offset="1" stopColor="#f7d10a" /></linearGradient>
              <linearGradient id="cp2" x1="0" y1="0" x2="0" y2="1"><stop stopColor="#a55cf0" /><stop offset=".5" stopColor="#ee5fa0" /><stop offset="1" stopColor="#ffa04a" /></linearGradient>
            </defs>
            <path d="M7 0h8L10.500 15c-.7 2.500-2 4-4.500 4H3C0 19-.5 16.500.5 14L4 3C4.600 1 5.500 0 7 0z" fill="url(#cp1)" />
            <path d="M12 0h5c2 0 3 1.500 3.500 3L21.500 7H13z" fill="#1540c8" />
            <path d="M21 26h-8l4.500-15c.7-2.500 2-4 4.500-4h3c3 0 3.500 2.500 2.500 5L24 23c-.6 2-1.500 3-3 3z" fill="url(#cp2)" />
            <path d="M16 26h-5c-2 0-3-1.500-3.500-3L6.500 19h8z" fill="#f5643c" />
          </svg>
        </Task>
        <Task>
          <svg width="30" height="30" viewBox="0 0 30 30">
            <defs>
              <linearGradient id="eg" x1="0" y1="0" x2="1" y2=".4"><stop stopColor="#2fa8ee" /><stop offset=".5" stopColor="#30c4c8" /><stop offset="1" stopColor="#6be04e" /></linearGradient>
              <linearGradient id="eb" x1="0" y1="0" x2="0" y2="1"><stop stopColor="#1d9be8" /><stop offset="1" stopColor="#0b6fd0" /></linearGradient>
            </defs>
            <circle cx="15" cy="15" r="15" fill="url(#eg)" />
            <path d="M0 14C2 8 9 6.500 14 9.500c-4 1-6 5-4 9.500 2 4.500 8 7.500 17 4A15 15 0 0 1 0 15z" fill="url(#eb)" />
            <path d="M11 14c-2 7 6 13 17 8.500C24 29 17 31 13 29 6 26 6 17 11 14z" fill="#114f9e" />
            <path d="M13 13.500c2-3 6-1.500 5.500 2-.3 2-1.700 2-1.500 3.300.3 2 6 2.500 10 0 1-.7 2-1.800 2.700-3 .2 3-.7 5-2 7-6 1.500-12-.5-14-3.500-1.200-2-1.500-4-.7-5.800z" fill="#232429" />
            <path d="M17 18.800c3 2.500 9.500 1.500 12-2.300 1-2 1-5-.5-7.500L19 12c0 3-2.500 4.500-2 6.800z" fill="#5fd35a" />
          </svg>
          <Running $w={8} $c="#9c9ca0" $l={24} />
        </Task>
        <Task><LTile>L</LTile></Task>
        <Task>
          <svg width="30" height="26" viewBox="0 0 30 26">
            <defs><linearGradient id="fo" x1="0" y1="0" x2="1" y2="1"><stop stopColor="#ffda62" /><stop offset="1" stopColor="#fbb916" /></linearGradient></defs>
            <path d="M0 1.500C0 .5.500 0 1.500 0H9l3 3V8H0z" fill="#e09b0a" /><path d="M0 5h10l2.500-2.500H29a1 1 0 0 1 1 1V26H1a1 1 0 0 1-1-1z" fill="url(#fo)" />
            <path d="M5.500 26v-5.500a2.500 2.500 0 0 1 2.500-2.500H21.500A2.500 2.500 0 0 1 24 20.500V26z" fill="#0e74cf" /><path d="M9.500 22h10.500" stroke="#0a4a8c" strokeWidth="1.2" />
          </svg>
          <Running $w={8} $c="#9c9ca0" $l={24} />
        </Task>
        <Task>
          <svg width="26" height="25" viewBox="0 0 26 25"><defs><linearGradient id="mo" x1="0" y1="0" x2="1" y2="1"><stop stopColor="#35d3da" /><stop offset="1" stopColor="#1477c4" /></linearGradient></defs><rect width="26" height="20" rx="1" fill="#77828c" /><rect x="1" y="1.5" width="24" height="17.5" fill="url(#mo)" /><path d="M11 20h4v3h4v1.500H7V23h4z" fill="#aebbc4" /></svg>
        </Task>
        <Task>
          <svg width="29" height="29" viewBox="0 0 29 29"><path d="M8 6V1h13v5" {...stroke("#2ab2ee", 1.8)} /><path d="M0 5a1 1 0 0 1 1-1H28a1 1 0 0 1 1 1V25a4 4 0 0 1-4 4H4a4 4 0 0 1-4-4z" fill="#ececec" /><path d="M8 6V4M21 6V4" stroke="#2ab2ee" strokeWidth="1.8" /><path d="M9 11h5v5H9z" fill="#f25022" /><path d="M15 11h5v5h-5z" fill="#7fba00" /><path d="M9 17h5v5H9z" fill="#00a4ef" /><path d="M15 17h5v5h-5z" fill="#ffb900" /></svg>
        </Task>
        <Task>
          <svg width="30" height="23" viewBox="0 0 30 23"><rect width="30" height="23" rx="1" fill="#3fb2ea" /><rect x="1.5" y="1.5" width="27" height="20" fill="#a6e2fa" /><circle cx="9.5" cy="9.5" r="6" fill="#1580cc" /><path d="M9.500 9.500V2.500a7 7 0 0 1 6.500 7z" fill="#f08a1c" /><path d="M17 14h4V6.500h2M21 10h2" {...stroke("#2178b8", 1.3)} /><circle cx="24" cy="6.5" r="1.6" {...stroke("#2178b8", 1.2)} /><circle cx="24" cy="12.5" r="1.6" {...stroke("#2178b8", 1.2)} /><path d="M4 18.500h10" stroke="#f08a1c" strokeWidth="2" /><path d="M16 18.500h10" stroke="#2178b8" strokeWidth="1.8" /><rect x="14" y="16.5" width="2" height="4" fill="#1467a8" /></svg>
        </Task>
        <Task>
          <svg width="30" height="24" viewBox="0 0 30 24"><path d="M0 4L14 -4 30 4v4H0z" fill="#0e5aa8" /><path d="M4 2H26V14H4z" fill="#f2f2f2" /><path d="M0 4L15 13 30 4V24H0z" fill="#36bdf2" /><path d="M0 24L22 9 30 4V24z" fill="#4fd0f8" /><path d="M0 4V24H30z" fill="#2196e3" /></svg>
          <TaskBadge $w={34} $bg="#dd9fe4" $c="#1c1020" $l={20.5} $t={3.5} $s={14}>99+</TaskBadge>
        </Task>
        <Task>
          <svg width="12" height="22" viewBox="0 0 12 22"><path d="M0 0H4V21.500L0 22zM8 0h4V22l-4-.5z" fill="#b1060f" /><path d="M0 0H4L12 22 8 21.500z" fill="#e50914" /></svg>
        </Task>
        <Task>
          <svg width="26" height="26" viewBox="0 0 26 26"><defs><linearGradient id="tg" x1="0" y1="0" x2="0" y2="1"><stop stopColor="#35a8e0" /><stop offset="1" stopColor="#1583c4" /></linearGradient></defs><circle cx="13" cy="13" r="13" fill="url(#tg)" /><path d="M5 13L19.500 7.300 17.300 19.300 12.700 16 10.500 18.200 10 14.300z" fill="#fff" /><path d="M10 14.300L17 9.500l-5.500 6-1 2.700z" fill="#c5dcea" /></svg>
        </Task>
        <Task>
          <HotPlate>
            <svg width="30" height="30" viewBox="0 0 30 30"><circle cx="15" cy="15" r="15" fill="#fcc934" /><path d="M15 15L2 7.500A15 15 0 0 1 28 7.500H15z" fill="#ea4335" /><path d="M2 7.500A15 15 0 0 0 15 30L21.500 18.800 15 15H8.500z" fill="#2ba24c" /><path d="M15 30A15 15 0 0 0 28 7.500H15L21.500 18.800z" fill="#fcc934" /><circle cx="15" cy="15" r="7.3" fill="#fff" /><circle cx="15" cy="15" r="5.8" fill="#4285f4" /></svg>
          </HotPlate>
          <TaskBadge $w={20} $bg="#8d6e63" $c="#f0e8e5" $l={28.5} $t={3.5} $s={11.5}>A</TaskBadge>
          <Running $w={20} $c="#dd9fe4" $l={18} />
        </Task>
        <Task>
          <svg width="26" height="28" viewBox="0 0 26 28">
            <defs>
              <linearGradient id="ma" x1="0" y1="0" x2="0" y2="1"><stop stopColor="#5a62c8" /><stop offset="1" stopColor="#7d9cf5" /></linearGradient>
              <linearGradient id="mb" x1="0" y1="0" x2="1" y2="1"><stop stopColor="#3d6fd8" /><stop offset="1" stopColor="#6fe0fa" /></linearGradient>
              <linearGradient id="mc" x1="0" y1="0" x2="1" y2="0"><stop stopColor="#cfa0f2" /><stop offset="1" stopColor="#7b4fc0" /></linearGradient>
            </defs>
            <path d="M12.500 0L2 6C.7 6.800 0 8 0 9.500V18c0 2 1 3.500 3 3.500l5.500-3V11l5-3z" fill="url(#ma)" />
            <path d="M12.500 0L24 6.500C25.500 7.500 26 8.500 26 10v10l-8.500-3.500V10.500L11 7z" fill="url(#mb)" />
            <path d="M2 21.500L11.500 27.300c1 .6 2 .6 3 0L24.500 21.500C25.700 20.700 26 20 26 18.500V11l-8.500 5.500L9 20.500z" fill="url(#mc)" />
            <path d="M13 9l4.500 2.500v5L13 19l-4.500-2.500v-5z" fill="#26252a" />
          </svg>
        </Task>
        <Task>
          <svg width="29" height="29" viewBox="0 0 29 29"><circle cx="14.5" cy="14.5" r="14.5" fill="#1ed760" /><path d="M5.500 10c6-1.800 12.500-1.300 18 1.700" {...stroke("#111", 2.9)} strokeLinecap="round" /><path d="M6.500 14.800c5-1.400 10.500-1 15 1.600" {...stroke("#111", 2.4)} strokeLinecap="round" /><path d="M7.300 19.200c4.500-1.100 8.700-.7 12.400 1.500" {...stroke("#111", 2)} strokeLinecap="round" /></svg>
          <Running $w={8} $c="#9c9ca0" $l={24} />
        </Task>
        <Task>
          <svg width="28" height="28" viewBox="0 0 28 28"><defs><linearGradient id="sk" x1="0" y1="0" x2="0" y2="1"><stop stopColor="#12b0f0" /><stop offset="1" stopColor="#0a74d4" /></linearGradient></defs><circle cx="14" cy="14" r="12.5" fill="url(#sk)" /><circle cx="8" cy="8" r="7.5" fill="#12a8ee" /><circle cx="20" cy="20" r="7.5" fill="#0d7cd8" /><text x="14" y="21.5" textAnchor="middle" fontSize="21" fontWeight="700" fill="#fff">S</text></svg>
          <TaskBadge $w={20} $bg="#ef4035" $c="#fff" $l={29} $t={4.5} $s={12}>1</TaskBadge>
          <Running $w={8} $c="#9c9ca0" $l={24} />
        </Task>
        <Tray>
          <TrayIcons $gap={23}>
            <svg width="14" height="9" viewBox="0 0 14 9" {...stroke("#fff", 1.9)}><path d="M1 8l6-6 6 6" /></svg>
            <svg width="20" height="15" viewBox="0 0 20 15" {...stroke("#fff", 1.5)}><rect x=".8" y=".8" width="18.4" height="13.4" rx="1.5" /><path d="M4 4.500h12M5 7.500h11" strokeDasharray="1.6 1.5" /><path d="M5 11h10" /></svg>
          </TrayIcons>
          <Lang><T $ls={-0.177}>ENG</T><T $ls={-0.266}>US</T></Lang>
          <TrayIcons $gap={10}>
            <svg width="20" height="16" viewBox="0 0 20 16" {...stroke("#fff", 1.5)}><path d="M.8 6C6-.5 14-.5 19.200 6M3.800 9c3.500-4.300 9-4.300 12.400 0M6.700 12c2-2.500 4.700-2.500 6.600 0" /><circle cx="10" cy="13.8" r="1.8" fill="#fff" stroke="none" /></svg>
            <svg width="20" height="16" viewBox="0 0 20 16" {...stroke("#fff", 1.4)} strokeLinejoin="round"><path d="M.8 5.500H4L9 1.200v13.600L4 10.500H.8zM12.500 5l6 6M18.500 5l-6 6" /></svg>
            <svg width="20" height="16" viewBox="0 0 20 16"><path d="M7 3.700h8.500a2 2 0 0 1 2 2v6.600a2 2 0 0 1-2 2H3.500a2 2 0 0 1-2-2V9.500" {...stroke("#fff", 1.5)} /><path d="M8 5.500h7.500v7H3.500V10h2.200z" fill="#fff" /><path d="M18 7h2v4h-2zM3.500 0L0 6h2.500L1.500 9.500 6 4H3.500L5 0z" fill="#fff" /></svg>
          </TrayIcons>
          <Clock><T $ls={-0.25}>4:45 pm</T><T $ls={0.103}>02/12/2024</T></Clock>
          <svg width="16" height="20" viewBox="0 0 16 20" fill="#ecb7ef"><path d="M8 0c3.700 0 6 2.500 6 6v5.500l2 4H0l2-4V6c0-3.500 2.300-6 6-6zM5 17h6c-.3 3-5.700 3-6 0z" /></svg>
        </Tray>
      </Taskbar>
    </Screen>
  );
}
